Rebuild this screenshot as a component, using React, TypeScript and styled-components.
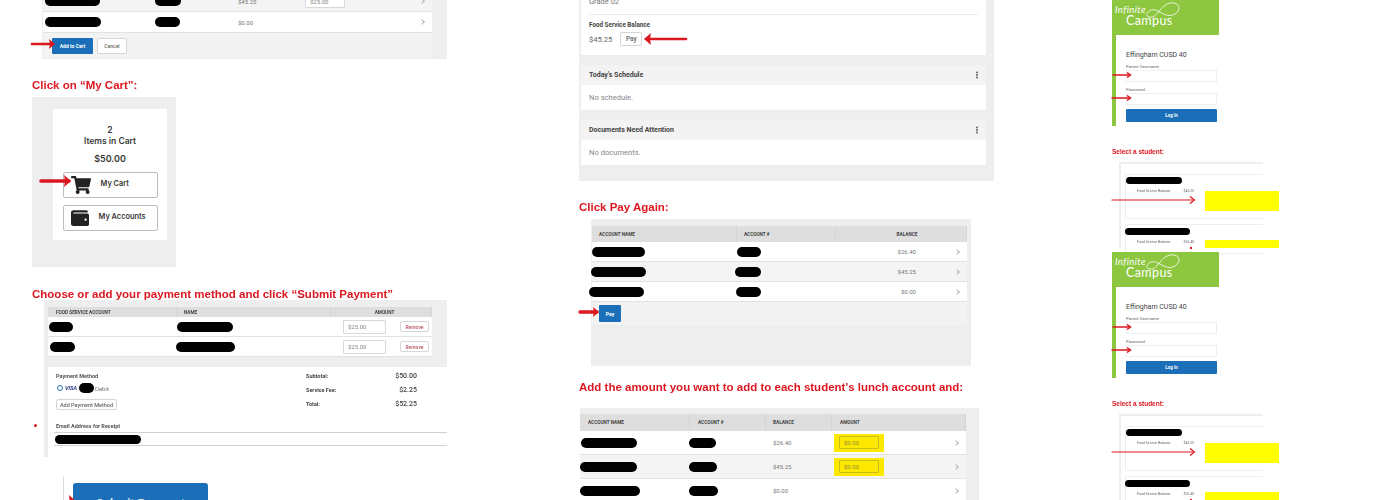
import React from 'react';
import styled, { createGlobalStyle } from 'styled-components';
import { FaShoppingCart, FaWallet } from 'react-icons/fa';

const RED = '#dc1720';
const BLUE = '#1a6fb8';
const PANEL = '#eeeeee';
const GREEN = '#8dc63f';

const GlobalStyle = createGlobalStyle`
  html, body {
    margin: 0;
    padding: 0;
    background: #fff;
    overflow: hidden;
  }
`;

const Page = styled.div`
  width: 1400px;
  height: 500px;
  overflow: hidden;
  display: grid;
  grid-template-columns: 547px 533px 288px;
  padding-left: 32px;
  box-sizing: border-box;
  font-family: Roboto, 'Liberation Sans', sans-serif;
  color: #444;
  filter: blur(0.45px);
`;

const Column = styled.div`
  display: flex;
  flex-direction: column;
  align-items: flex-start;
  min-width: 0;
`;

const StepTitle = styled.h2<{ $top: number; $bottom: number }>`
  margin: ${(p) => p.$top}px 0 ${(p) => p.$bottom}px;
  font: bold 11.5px/15px 'Liberation Sans', Arial, sans-serif;
  color: ${RED};
  white-space: nowrap;
`;

/* ---------- shared table parts ---------- */

const Pill = styled.span<{ $width: number; $shift?: number; $height?: number }>`
  display: block;
  width: ${(p) => p.$width}px;
  height: ${(p) => p.$height ?? 10}px;
  margin-left: ${(p) => p.$shift ?? 0}px;
  background: #000;
  border-radius: 6px;
`;

const HeaderRow = styled.div<{ $columns: string; $height: number; $size?: number }>`
  display: grid;
  grid-template-columns: ${(p) => p.$columns};
  height: ${(p) => p.$height}px;
  background: #dedede;
  align-items: center;
  font-size: ${(p) => p.$size ?? 4.7}px;
  font-weight: 700;
  color: #444;
  text-transform: uppercase;
`;

const HeaderCell = styled.div<{ $pad?: number; $center?: boolean }>`
  height: 100%;
  display: flex;
  align-items: center;
  justify-content: ${(p) => (p.$center ? 'center' : 'flex-start')};
  padding-left: ${(p) => p.$pad ?? 7}px;
  border-right: 1px solid #d4d4d4;
  box-sizing: border-box;
`;

const Row = styled.div<{ $columns: string; $height: number; $shaded?: boolean }>`
  display: grid;
  box-sizing: border-box;
  grid-template-columns: ${(p) => p.$columns};
  height: ${(p) => p.$height}px;
  align-items: center;
  background: ${(p) => (p.$shaded ? '#f4f4f4' : '#fff')};
  border-bottom: 1px solid #e2e2e2;
  font-size: 6px;
  color: #777;
`;

const Money = styled.span<{ $right?: boolean; $pad?: number }>`
  display: block;
  text-align: ${(p) => (p.$right ? 'right' : 'left')};
  padding-left: ${(p) => p.$pad ?? 0}px;
`;

const Chevron = styled.span`
  display: block;
  justify-self: end;
  width: 3px;
  height: 3px;
  margin-right: 8px;
  border-top: 1px solid #b5b5b5;
  border-right: 1px solid #b5b5b5;
  transform: rotate(45deg);
`;

const Footer = styled.div<{ $height: number; $pad: number }>`
  display: flex;
  align-items: center;
  gap: 4px;
  height: ${(p) => p.$height}px;
  padding-left: ${(p) => p.$pad}px;
  background: #f3f3f3;
`;

const PrimaryButton = styled.button<{ $width: number; $height: number }>`
  width: ${(p) => p.$width}px;
  height: ${(p) => p.$height}px;
  padding: 0;
  background: ${BLUE};
  border: 0;
  border-radius: 1px;
  color: #fff;
  font: 700 5px Roboto, sans-serif;
`;

const GhostButton = styled.button<{ $width: number; $height: number; $color?: string; $size?: number }>`
  width: ${(p) => p.$width}px;
  height: ${(p) => p.$height}px;
  padding: 0;
  background: #fff;
  border: 1px solid #d6d6d6;
  border-radius: 2px;
  color: ${(p) => p.$color ?? '#666'};
  font: 500 ${(p) => p.$size ?? 5.5}px Roboto, sans-serif;
  white-space: nowrap;
`;

const MoneyInput = styled.div<{ $width: number; $height: number }>`
  width: ${(p) => p.$width}px;
  height: ${(p) => p.$height}px;
  box-sizing: border-box;
  padding-left: 4px;
  display: flex;
  align-items: center;
  background: #fff;
  border: 1px solid #d8d8d8;
  border-radius: 1px;
  font-size: 6px;
  color: #888;
`;

/* ---------- red pointers ---------- */

const ArrowBox = styled.svg<{ $left: number; $top: number }>`
  position: absolute;
  left: ${(p) => p.$left}px;
  top: ${(p) => p.$top}px;
  overflow: visible;
`;

type ArrowProps = { left: number; top: number; length: number; weight: number; head: number; flip?: boolean; open?: boolean };

// top is the y of the shaft's centre, relative to the positioned parent
const Arrow: React.FC<ArrowProps> = ({ left, top, length, weight, head, flip, open }) => (
  <ArrowBox $left={left} $top={top - head} width={length} height={head * 2} viewBox={`0 0 ${length} ${head * 2}`}>
    <g transform={flip ? `translate(${length} 0) scale(-1 1)` : undefined}>
      <line x1={0} y1={head} x2={length - 2} y2={head} stroke={RED} strokeWidth={weight} strokeLinecap="round" />
      {open ? (
        <path
          d={`M${length - head - 1} 0.5 L${length - 0.5} ${head} L${length - head - 1} ${head * 2 - 0.5}`}
          fill="none"
          stroke={RED}
          strokeWidth={weight}
        />
      ) : (
        <path d={`M${length - head - 1} 0 L${length} ${head} L${length - head - 1} ${head * 2} L${length - head} ${head} Z`} fill={RED} />
      )}
    </g>
  </ArrowBox>
);

/* ---------- add to cart strip ---------- */

const CartTable = styled.div`
  position: relative;
  margin: -9px 0 0 10px;
  width: 405px;
  box-sizing: border-box;
  padding: 0 15px 1px 1px;
  background: ${PANEL};
`;

const CART_COLS = '112px 83px 67px 1fr 20px';

const CartInput = styled(MoneyInput)`
  height: 14px;
`;

/* ---------- my cart card ---------- */

const CartPanel = styled.div`
  position: relative;
  width: 144px;
  height: 170px;
  box-sizing: border-box;
  padding: 12px 0 0 21px;
  background: ${PANEL};
`;

const CartCard = styled.div`
  width: 114px;
  height: 131px;
  box-sizing: border-box;
  padding: 16px 9px 0;
  background: #fff;
  display: flex;
  flex-direction: column;
  align-items: center;
  font-family: Inter, sans-serif;
  font-weight: 600;
  color: #3a3a3a;
  font-size: 8.5px;
  line-height: 10.5px;
`;

const CartTotal = styled.div`
  margin: 8px 0 7px;
  font-size: 9px;
`;

const CartButton = styled.div<{ $gap: number }>`
  width: 95px;
  height: 26px;
  margin-bottom: 7px;
  box-sizing: border-box;
  padding-left: 7px;
  display: flex;
  align-items: center;
  gap: ${(p) => p.$gap}px;
  background: #fff;
  border: 1px solid #bdbdbd;
  border-radius: 2px;
  font-size: 7.4px;
  flex-shrink: 0;
  svg {
    color: #222;
    flex-shrink: 0;
  }
`;

/* ---------- payment ---------- */

const PaymentPanel = styled.div`
  position: relative;
  width: 403px;
  height: 157px;
  margin-left: 12px;
  box-sizing: border-box;
  border-left: 4px solid ${PANEL};
`;

const PaymentTop = styled.div`
  padding: 7px 15px 10px 0;
  background: ${PANEL};
`;

const PAY_COLS = '129px 154px 101px';

const RowActions = styled.div`
  display: flex;
  align-items: center;
  justify-content: space-between;
  padding: 0 3px 0 12px;
`;

const PaymentBody = styled.div`
  display: grid;
  grid-template-columns: 250px 60px 51px;
  padding: 6px 0 0 8px;
  font-size: 5.5px;
  color: #444;
`;

const Label = styled.div`
  font-weight: 700;
  font-size: 5.5px;
  color: #555;
  line-height: 7px;
`;

const MethodLine = styled.div`
  display: flex;
  align-items: center;
  height: 10px;
  margin: 3px 0 6px 1px;
  font-size: 6px;
  color: #777;
`;

const Radio = styled.span`
  width: 4px;
  height: 4px;
  border: 1.5px solid #1d6fa8;
  border-radius: 50%;
  margin-right: 2px;
  flex-shrink: 0;
`;

const VisaMark = styled.span`
  width: 14px;
  flex-shrink: 0;
  font: italic 800 5.2px 'Liberation Sans', sans-serif;
  color: #24307a;
`;

const DebitText = styled.span`
  margin-left: 1px;
`;

const SummaryStack = styled.div<{ $right?: boolean }>`
  display: flex;
  flex-direction: column;
  gap: 7px;
  text-align: ${(p) => (p.$right ? 'right' : 'left')};
  font-weight: ${(p) => (p.$right ? 500 : 700)};
  font-size: ${(p) => (p.$right ? 7 : 5.5)}px;
  line-height: 7px;
  color: #444;
`;

const EmailBlock = styled.div`
  margin: 13px 0 0 8px;
`;

const EmailField = styled.div`
  height: 12px;
  margin-top: 2px;
  margin-left: -2px;
  border-top: 1px solid #d2d2d2;
  border-bottom: 1px solid #d2d2d2;
  display: flex;
  align-items: center;
`;

const RequiredDot = styled.span`
  position: absolute;
  left: -14px;
  top: 124px;
  width: 3px;
  height: 3px;
  border-radius: 50%;
  background: ${RED};
`;

const SubmitStrip = styled.div`
  position: relative;
  margin: 19px 0 0 31px;
  padding-left: 9px;
  border-left: 1px solid #dcdcdc;
`;

const SubmitButton = styled.div`
  width: 135px;
  height: 41px;
  margin-top: 7px;
  display: flex;
  align-items: center;
  justify-content: center;
  background: ${BLUE};
  border-radius: 3px;
  color: #d4e4f1;
  font: 700 12px Roboto, sans-serif;
`;

/* ---------- student card ---------- */

const StudentPanel = styled.div`
  position: relative;
  width: 415px;
  margin-top: -10px;
  box-sizing: border-box;
  padding: 0 8px 16px 2px;
  background: ${PANEL};
`;

const StudentCard = styled.div`
  height: 65px;
  box-sizing: border-box;
  padding: 7px 8px 0;
  background: #fff;
  font-size: 7.5px;
  line-height: 9px;
  color: #777;
`;

const Divider = styled.div`
  margin: 8px 0 6px;
  border-top: 1px solid #ececec;
`;

const BalanceTitle = styled.div`
  font-size: 6.3px;
  font-weight: 700;
  color: #444;
  line-height: 8px;
`;

const BalanceLine = styled.div`
  display: flex;
  align-items: center;
  gap: 8px;
  margin-top: 3px;
  font-size: 7.6px;
  color: #666;
`;

const Section = styled.section`
  margin-top: 10px;
  height: 45px;
  background: #fff;
`;

const SectionHead = styled.div`
  display: flex;
  align-items: center;
  justify-content: space-between;
  height: 20px;
  padding: 0 8px;
  background: #f3f3f3;
  font-size: 7px;
  font-weight: 700;
  color: #444;
`;

const Dots = styled.span`
  width: 2px;
  height: 2px;
  border-radius: 50%;
  background: #666;
  box-shadow: 0 -2.5px 0 #666, 0 2.5px 0 #666;
`;

const SectionBody = styled.div`
  height: 25px;
  padding-left: 8px;
  display: flex;
  align-items: center;
  font-size: 7.6px;
  color: #888;
`;

/* ---------- pay table ---------- */

const PayTable = styled.div`
  position: relative;
  width: 380px;
  height: 147px;
  margin-left: 12px;
  box-sizing: border-box;
  padding: 7px 4px 0 1px;
  background: ${PANEL};
`;

const BALANCE_COLS = '145px 99px 80px 1fr';

/* ---------- amount table ---------- */

const AmountTable = styled.div`
  position: relative;
  width: 399px;
  margin: 13px 0 0 1px;
  box-sizing: border-box;
  padding: 6px 13px 0 0;
  background: ${PANEL};
`;

const AMOUNT_COLS = '110px 76px 66px 1fr 16px';

const Highlight = styled.div`
  width: 50px;
  height: 18px;
  margin-left: 2px;
  display: flex;
  align-items: center;
  justify-content: center;
  background: #fde800;
`;

const AmountInput = styled(MoneyInput)`
  background: #fde800;
  border-color: #c9bb20;
  color: #8d8a3a;
`;

/* ---------- infinite campus thumbnails ---------- */

const LoginBlock = styled.div`
  width: 260px;
  height: 252px;
  display: flex;
  flex-direction: column;
  align-items: flex-start;
  flex-shrink: 0;
`;

const LoginCard = styled.div`
  position: relative;
  width: 107px;
  height: 126px;
  flex-shrink: 0;
`;

const Logo = styled.div`
  position: relative;
  height: 35px;
  box-sizing: border-box;
  padding: 5px 0 0 3px;
  background: ${GREEN};
  color: #fff;
  font-family: Lato, sans-serif;
`;

const LogoTop = styled.div`
  font-style: italic;
  font-size: 9.5px;
  line-height: 10px;
  letter-spacing: 0.4px;
`;

const LogoBottom = styled.div`
  font-size: 12.5px;
  line-height: 11px;
  margin-left: 11px;
  letter-spacing: 0.4px;
`;

const LogoSwirl = styled.svg`
  position: absolute;
  left: 34px;
  top: 1px;
`;

const LoginBody = styled.div`
  height: 91px;
  box-sizing: border-box;
  padding: 16px 2px 0 10px;
  border-left: 4px solid ${GREEN};
  background: #fff;
`;

const DistrictName = styled.div`
  font-size: 7px;
  line-height: 9px;
  color: #444;
  margin-bottom: 4px;
`;

const FieldLabel = styled.div`
  font-size: 4.3px;
  line-height: 5px;
  color: #666;
  margin-bottom: 1px;
`;

const FieldInput = styled.div`
  height: 12px;
  margin-bottom: 5px;
  border: 1px solid #efefef;
  box-sizing: border-box;
`;

const LoginButton = styled.div`
  height: 13px;
  margin-top: -1px;
  display: flex;
  align-items: center;
  justify-content: center;
  background: ${BLUE};
  border-radius: 1px;
  color: #fff;
  font-size: 4.5px;
  font-weight: 700;
`;

const SelectTitle = styled.div`
  margin: 21px 0 5px;
  font: bold 6.5px/10px 'Liberation Sans', sans-serif;
  color: ${RED};
`;

const StudentFrame = styled.div`
  position: relative;
  width: 144px;
  height: 86px;
  margin-left: 7px;
  box-sizing: border-box;
  padding: 10px 0 0 4px;
  border-top: 2px solid #eee;
  border-left: 2px solid #eee;
`;

const StudentEntry = styled.div<{ $height: number; $pad: number }>`
  height: ${(p) => p.$height}px;
  margin-bottom: 5px;
  padding-top: ${(p) => p.$pad}px;
  box-sizing: border-box;
  border-top: 1px solid #eee;
  border-left: 1px solid #eee;
  border-bottom: 1px solid #eee;
  border-radius: 2px 0 0 2px;
`;

const EntryLine = styled.div`
  display: flex;
  justify-content: flex-start;
  gap: 13px;
  margin: 5px 0 0 11px;
  font-size: 3.5px;
  line-height: 5px;
  color: #666;
`;

const YellowBlock = styled.span<{ $top: number; $height: number }>`
  position: absolute;
  left: 84px;
  top: ${(p) => p.$top}px;
  width: 74px;
  height: ${(p) => p.$height}px;
  background: #ffff00;
`;

const ArrowTick = styled.span`
  position: absolute;
  left: 69px;
  top: 83px;
  width: 2px;
  height: 2px;
  background: ${RED};
`;

const cartRows = [
  { a: 55, b: 26, amount: '$45.25', input: '$25.00', shaded: true },
  { a: 56, b: 25, amount: '$0.00', input: '', shaded: false },
];

const balances = [
  { a: 53, as: 0, b: 24, bs: 0, amount: '$26.40', shaded: false },
  { a: 55, as: -1, b: 26, bs: -2, amount: '$45.25', shaded: true },
  { a: 55, as: -3, b: 25, bs: -1, amount: '$0.00', shaded: false },
];

const amounts = [
  { a: 56, as: 1, b: 27, bs: -1, amount: '$26.40', input: true, shaded: false },
  { a: 57, as: 0, b: 28, bs: -1, amount: '$45.25', input: true, shaded: true },
  { a: 60, as: 0, b: 29, bs: -1, amount: '$0.00', input: false, shaded: false },
];

const ThumbnailPair: React.FC = () => (
  <LoginBlock>
    <LoginCard>
      <Logo>
        <LogoTop>Infinite</LogoTop>
        <LogoBottom>Campus</LogoBottom>
        <LogoSwirl width="36" height="18" viewBox="0 0 36 18" fill="none" stroke="#fff" strokeWidth="0.8">
          <path d="M1 13 C3 8 8 8 12 10 C16 12 22 17 29 13 C35 9 34 3 28 2 C21 1 17 6 14 9 C11 13 8 17 4 16 C1 15.5 0 14 1 13 Z" />
        </LogoSwirl>
      </Logo>
      <LoginBody>
        <DistrictName>Effingham CUSD 40</DistrictName>
        <FieldLabel>Parent Username</FieldLabel>
        <FieldInput />
        <FieldLabel>Password</FieldLabel>
        <FieldInput />
        <LoginButton>Log In</LoginButton>
      </LoginBody>
      <Arrow left={1} top={75} length={18} weight={1.5} head={3} open />
      <Arrow left={0} top={98} length={19} weight={1.5} head={3} open />
    </LoginCard>
    <SelectTitle>Select a student:</SelectTitle>
    <StudentFrame>
      <StudentEntry $height={45} $pad={2}>
        <Pill $width={56} $height={7} />
        <EntryLine>
          <span>Food Service Balance</span>
          <span>$45.25</span>
        </EntryLine>
      </StudentEntry>
      <StudentEntry $height={30} $pad={3}>
        <Pill $width={65} $height={7} $shift={-1} />
        <EntryLine>
          <span>Food Service Balance</span>
          <span>$26.40</span>
        </EntryLine>
      </StudentEntry>
      <YellowBlock $top={27} $height={20} />
      <YellowBlock $top={76} $height={8} />
      <ArrowTick />
      <Arrow left={-9} top={36} length={83} weight={1.2} head={4} open />
    </StudentFrame>
  </LoginBlock>
);

const App: React.FC = () => (
  <>
    <GlobalStyle />
    <Page>
      <Column>
        <CartTable>
          {cartRows.map((row) => (
            <Row key={row.amount} $columns={CART_COLS} $height={21} $shaded={row.shaded}>
              <Pill $width={row.a} $shift={2} />
              <Pill $width={row.b} />
              <Money>{row.amount}</Money>
              {row.input ? <CartInput $width={40} $height={14}>{row.input}</CartInput> : <span />}
              <Chevron />
            </Row>
          ))}
          <Footer $height={25} $pad={9}>
            <PrimaryButton $width={41} $height={16}>Add to Cart</PrimaryButton>
            <GhostButton $width={30} $height={16} $size={5}>Cancel</GhostButton>
          </Footer>
          <Arrow left={-10} top={53} length={23} weight={2.6} head={5} />
        </CartTable>

        <StepTitle $top={19} $bottom={4}>Click on “My Cart”:</StepTitle>
        <CartPanel>
          <CartCard>
            <div>2</div>
            <div>Items in Cart</div>
            <CartTotal>$50.00</CartTotal>
            <CartButton $gap={10}>
              <FaShoppingCart size={20} />
              My Cart
            </CartButton>
            <CartButton $gap={10}>
              <FaWallet size={18} />
              My Accounts
            </CartButton>
          </CartCard>
          <Arrow left={9} top={84} length={30} weight={3.6} head={6} />
        </CartPanel>

        <StepTitle $top={20} $bottom={-2}>Choose or add your payment method and click “Submit Payment”</StepTitle>
        <PaymentPanel>
          <PaymentTop>
            <HeaderRow $columns={PAY_COLS} $height={10}>
              <HeaderCell $pad={8}>Food Service Account</HeaderCell>
              <HeaderCell>Name</HeaderCell>
              <HeaderCell $center>Amount</HeaderCell>
            </HeaderRow>
            <Row $columns={PAY_COLS} $height={20}>
              <Pill $width={24} $shift={1} />
              <Pill $width={56} />
              <RowActions>
                <MoneyInput $width={43} $height={14}>$25.00</MoneyInput>
                <GhostButton $width={29} $height={11} $color="#b4555f" $size={5}>Remove</GhostButton>
              </RowActions>
            </Row>
            <Row $columns={PAY_COLS} $height={20}>
              <Pill $width={25} $shift={2} />
              <Pill $width={59} $shift={-1} />
              <RowActions>
                <MoneyInput $width={43} $height={14}>$25.00</MoneyInput>
                <GhostButton $width={29} $height={11} $color="#b4555f" $size={5}>Remove</GhostButton>
              </RowActions>
            </Row>
          </PaymentTop>
          <PaymentBody>
            <div>
              <Label>Payment Method</Label>
              <MethodLine>
                <Radio />
                <VisaMark>VISA</VisaMark>
                <Pill $width={15} />
                <DebitText>Debit</DebitText>
              </MethodLine>
              <GhostButton $width={61} $height={11}>Add Payment Method</GhostButton>
            </div>
            <SummaryStack>
              <span>Subtotal:</span>
              <span>Service Fee:</span>
              <span>Total:</span>
            </SummaryStack>
            <SummaryStack $right>
              <span>$50.00</span>
              <span>$2.25</span>
              <span>$52.25</span>
            </SummaryStack>
          </PaymentBody>
          <EmailBlock>
            <Label>Email Address for Receipt</Label>
            <EmailField>
              <Pill $width={86} $height={9} $shift={1} />
            </EmailField>
          </EmailBlock>
          <RequiredDot />
        </PaymentPanel>
        <SubmitStrip>
          <SubmitButton>Submit Payment</SubmitButton>
          <Arrow left={0} top={30} length={17} weight={5} head={11} />
        </SubmitStrip>
      </Column>

      <Column>
        <StudentPanel>
          <StudentCard>
            <div>Grade 02</div>
            <Divider />
            <BalanceTitle>Food Service Balance</BalanceTitle>
            <BalanceLine>
              $45.25
              <GhostButton $width={22} $height={14} $size={6.5}>Pay</GhostButton>
            </BalanceLine>
          </StudentCard>
          <Section>
            <SectionHead>Today's Schedule<Dots /></SectionHead>
            <SectionBody>No schedule.</SectionBody>
          </Section>
          <Section>
            <SectionHead>Documents Need Attention<Dots /></SectionHead>
            <SectionBody>No documents.</SectionBody>
          </Section>
          <Arrow left={65} top={49} length={42} weight={2.6} head={6} flip />
        </StudentPanel>

        <StepTitle $top={19} $bottom={4}>Click Pay Again:</StepTitle>
        <PayTable>
          <HeaderRow $columns="145px 99px 1fr" $height={16}>
            <HeaderCell>Account Name</HeaderCell>
            <HeaderCell>Account #</HeaderCell>
            <HeaderCell $center $pad={12}>Balance</HeaderCell>
          </HeaderRow>
          {balances.map((row) => (
            <Row key={row.amount} $columns={BALANCE_COLS} $height={20} $shaded={row.shaded}>
              <Pill $width={row.a} $shift={row.as} />
              <Pill $width={row.b} $shift={row.bs} />
              <Money $right>{row.amount}</Money>
              <Chevron />
            </Row>
          ))}
          <Footer $height={23} $pad={7}>
            <PrimaryButton $width={22} $height={17}>Pay</PrimaryButton>
          </Footer>
          <Arrow left={-11} top={93} length={19} weight={3.4} head={5} />
        </PayTable>

        <StepTitle $top={14} $bottom={0}>Add the amount you want to add to each student's lunch account and:</StepTitle>
        <AmountTable>
          <HeaderRow $columns="110px 76px 66px 1fr" $height={17}>
            <HeaderCell $pad={8}>Account Name</HeaderCell>
            <HeaderCell $pad={8}>Account #</HeaderCell>
            <HeaderCell>Balance</HeaderCell>
            <HeaderCell $pad={8}>Amount</HeaderCell>
          </HeaderRow>
          {amounts.map((row) => (
            <Row key={row.amount} $columns={AMOUNT_COLS} $height={24} $shaded={row.shaded}>
              <Pill $width={row.a} $shift={row.as} />
              <Pill $width={row.b} $shift={row.bs} />
              <Money $pad={7}>{row.amount}</Money>
              {row.input ? (
                <Highlight>
                  <AmountInput $width={40} $height={13}>$0.00</AmountInput>
                </Highlight>
              ) : (
                <span />
              )}
              <Chevron />
            </Row>
          ))}
        </AmountTable>
      </Column>

      <Column>
        <ThumbnailPair />
        <ThumbnailPair />
      </Column>
    </Page>
  </>
);

export default App;
